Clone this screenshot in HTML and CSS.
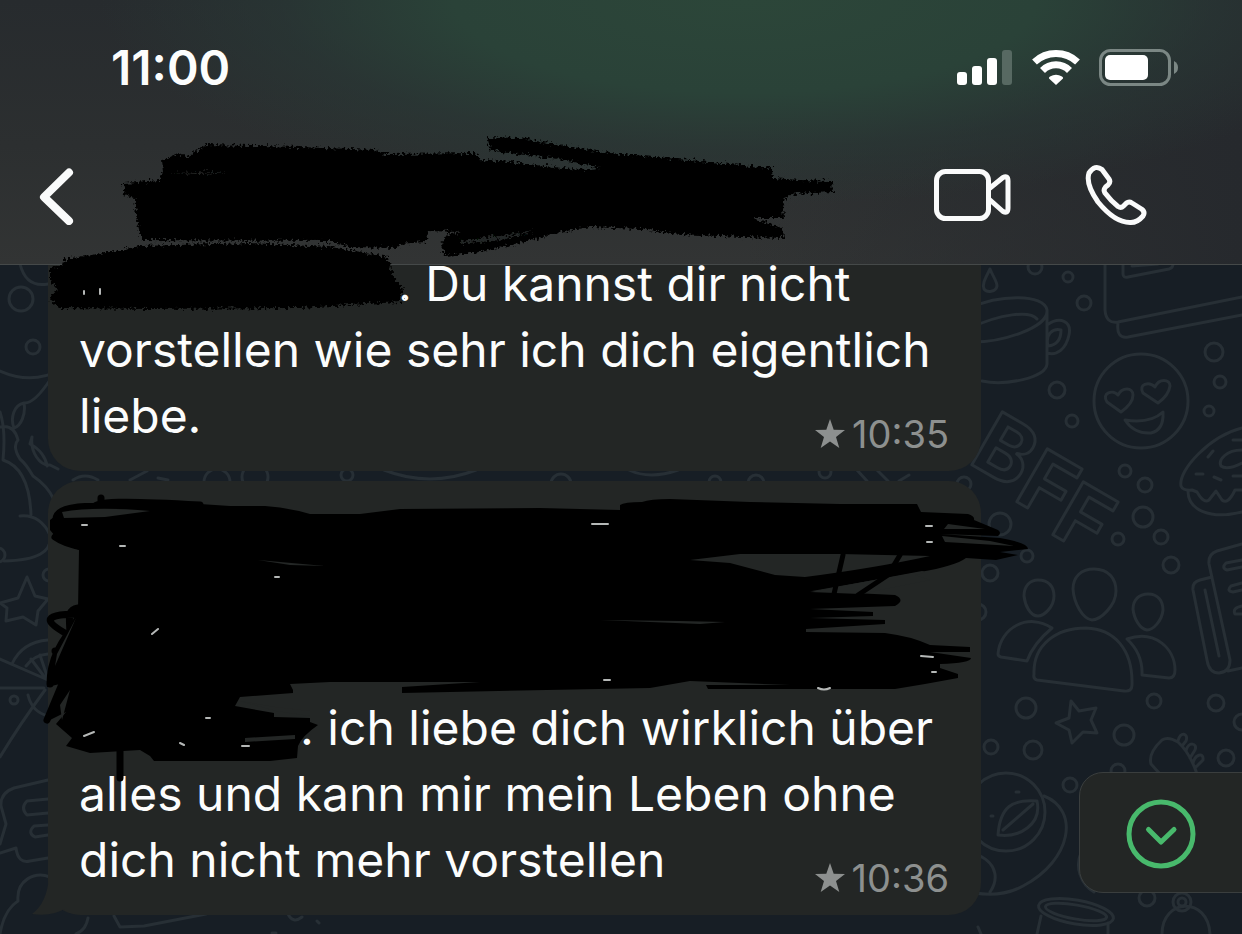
FILE: index.html
```
<!DOCTYPE html>
<html lang="de">
<head>
<meta charset="utf-8">
<meta name="viewport" content="width=device-width, initial-scale=1">
<title>Chat</title>
<link rel="stylesheet" href="styles.css">
</head>
<body>
<div class="phone">
  <svg class="wallpaper" width="1242" height="934" viewBox="0 0 1242 934" aria-hidden="true">
    <!-- mug -->
    <path d="M990 269C985 279 982 284 984 289C987 293 996 292 997 286C997 281 993 277 990 269Z"/>
    <path d="M970 308C1000 294 1044 294 1047 310C1049 328 1000 343 970 342M970 328C1000 314 1030 310 1037 319M1047 310V364C1046 378 1005 386 982 381M1047 325C1060 316 1072 321 1069 335C1066 349 1057 356 1047 353M1048 346C1045 334 1053 328 1061 330C1061 338 1058 345 1048 346Z"/>
    <!-- book -->
    <path d="M1105 264V310Q1106 324 1118 322L1242 297M1118 323Q1116 339 1128 337L1242 315M1123 264V274Q1123 278 1128 277L1169 269Q1173 268 1173 264M1132 266L1158 264"/>
    <!-- smiley -->
    <circle cx="1141" cy="401" r="47"/>
    <path d="M1121 412L1107 402C1101 393 1113 389 1118 395C1122 387 1133 387 1133 395C1133 401 1128 407 1121 412ZM1158 403L1143 393C1138 384 1149 381 1155 387C1159 378 1170 379 1170 386C1169 393 1165 398 1158 403ZM1125 420Q1150 424 1163 412Q1164 430 1151 433Q1134 434 1125 420Z"/>
    <!-- lettering -->
    <g class="lettering">
      <text transform="translate(967 462) rotate(30)">B</text>
      <text transform="translate(1012 499) rotate(30)">F</text>
      <text transform="translate(1048 532) rotate(30)">F</text>
    </g>
    <!-- donut -->
    <path d="M1242 428C1210 436 1178 470 1181 486Q1183 491 1192 490L1197 492Q1204 504 1209 500L1216 491L1222 500Q1228 505 1235 490H1242M1188 491C1188 510 1210 520 1242 512M1242 450C1226 450 1218 460 1221 466C1226 470 1236 466 1242 463M1208 457L1213 451M1196 474H1203M1214 477L1221 480M1233 440H1242M1233 476H1242"/>
    <!-- people -->
    <path d="M1094 569C1109 569 1116 579 1116 591C1116 606 1100 620 1092 620C1083 619 1074 604 1073 589C1073 577 1081 569 1094 569ZM1038 580C1049 580 1054 587 1054 596C1054 607 1044 616 1038 616C1030 616 1025 605 1024 596C1024 586 1030 580 1038 580ZM1148 594C1159 594 1163 602 1163 610C1162 621 1153 630 1147 630C1140 629 1134 619 1133 609C1133 600 1139 594 1148 594ZM1034 674C1033 645 1056 628 1086 628C1114 629 1133 649 1132 685Q1132 692 1124 691L1037 680Q1033 679 1034 674ZM998 654C1000 628 1028 612 1052 628Q1033 644 1027 661L1001 657Q998 656 998 654ZM1127 639C1155 629 1175 649 1175 670Q1175 678 1169 678L1142 675Q1143 654 1127 639Z"/>
    <!-- notebook -->
    <path d="M1242 544L1217 551Q1208 554 1209 564L1230 660Q1230 672 1219 673Q1209 673 1207 660L1193 590Q1192 582 1200 580L1212 577M1205 590L1219 656M1228 671L1242 668M1242 560L1226 563Q1221 568 1227 570L1242 567M1242 583L1231 586Q1226 591 1233 592L1242 590M1242 606Q1232 608 1235 614H1242"/>
    <!-- star and toe -->
    <path d="M1071 701L1079 711L1096 708L1091 720L1097 733L1083 732L1072 743L1069 730L1056 723L1069 718Z"/>
    <path d="M1160 774L1151 764Q1148 753 1162 740Q1168 736 1178 742Q1190 753 1197 774M1178 741C1180 731 1189 733 1186 741L1182 746M1186 751C1188 741 1198 743 1195 750L1190 758M1193 764C1194 755 1204 751 1203 760L1196 767"/>
    <!-- avocado and jar -->
    <circle cx="1006" cy="812" r="39"/>
    <path d="M1044 796C1080 810 1072 860 1023 886C1005 896 988 895 975 893M978 855C1000 865 997 882 990 892M998 835C1000 807 1012 799 1037 801C1042 824 1020 838 998 835ZM1003 830L1033 804M1016 792H1019M991 816H993M1081 853C1075 866 1080 884 1094 892"/>
    <ellipse cx="1076" cy="912" rx="38" ry="12" transform="rotate(10 1076 912)"/>
    <ellipse cx="1076" cy="912" rx="31" ry="7" transform="rotate(10 1076 912)"/>
    <path d="M1041 916L1037 934M1108 923V934M1162 934C1162 898 1208 896 1210 934M978 927L981 934"/>
    <circle cx="1182" cy="902" r="9"/><circle cx="1182" cy="902" r="4"/>
    <!-- bubbles, right side -->
    <circle cx="1035" cy="267" r="7"/><circle cx="1068" cy="277" r="5"/><circle cx="1084" cy="303" r="7"/><circle cx="1214" cy="352" r="9"/><circle cx="1220" cy="382" r="6"/><circle cx="1209" cy="411" r="5"/><circle cx="1057" cy="390" r="8"/><circle cx="1072" cy="421" r="6"/><circle cx="1125" cy="471" r="6"/><circle cx="1145" cy="485" r="7"/><circle cx="1143" cy="517" r="10"/><circle cx="1118" cy="539" r="6"/><circle cx="1161" cy="537" r="7"/><circle cx="1171" cy="565" r="8"/><circle cx="1000" cy="524" r="11"/><circle cx="1027" cy="556" r="6"/><circle cx="990" cy="573" r="8"/><circle cx="978" cy="612" r="8"/><circle cx="1154" cy="701" r="7"/><circle cx="1026" cy="708" r="10"/><circle cx="1124" cy="735" r="10"/><circle cx="1216" cy="703" r="8"/><circle cx="991" cy="747" r="7"/><circle cx="1033" cy="750" r="9"/><circle cx="1226" cy="758" r="8"/><circle cx="1242" cy="722" r="8"/><circle cx="1070" cy="785" r="7"/><circle cx="1118" cy="771" r="7"/><circle cx="1147" cy="898" r="8"/><circle cx="964" cy="484" r="7"/>
    <!-- left side -->
    <circle cx="21" cy="299" r="12"/><circle cx="33" cy="347" r="7"/><circle cx="49" cy="575" r="6"/><circle cx="14" cy="700" r="4"/><circle cx="-2" cy="555" r="7"/>
    <path d="M20 264Q26 288 48 284M0 371Q32 385 60 370M50 380Q34 404 24 403C14 405 10 418 14 428C21 426 26 414 24 403M0 427Q14 424 18 440Q12 446 20 459Q26 464 33 476Q48 486 54 500M32 437C30 452 40 466 50 465L58 469M32 437L30 444C40 449 46 458 47 466M0 412Q6 430 3 460C22 466 30 486 31 515M20 516Q40 514 50 535Q54 560 4 561M0 603L18 598L27 577L35 596L48 599L38 611L36 625L23 617L6 621L7 608Z"/>
    <path d="M0 659L48 680M0 688H44M0 757Q20 724 45 690M12 664Q22 642 48 640M26 666Q34 655 48 654M28 695Q32 712 48 716M31 659L46 679M40 655L47 676"/>
    <path d="M48 780L14 788Q0 793 1 806L6 824L0 844M0 853L16 848Q18 864 30 861L48 858M48 799L27 801Q20 808 27 815L48 813M48 825L34 826Q27 833 35 837L48 835M0 934Q4 910 18 901C16 880 35 871 50 877M88 918Q86 930 76 934M114 916L120 927L144 926L206 914M288 914Q293 924 302 917M272 933H276M317 921L319 923"/>
    <!-- strip between messages -->
    <path d="M73 480Q85 472 98 480M130 480L147 471M158 478L168 480M384 470Q430 488 476 470M629 470Q650 480 678 470M857 470L867 481M877 470L888 481M899 481L909 475"/>
    <circle cx="217" cy="482" r="13"/><circle cx="255" cy="477" r="13"/><circle cx="347" cy="475" r="6"/><circle cx="561" cy="484" r="10"/><circle cx="715" cy="482" r="6"/><circle cx="756" cy="483" r="8"/><circle cx="825" cy="472" r="6"/>
  </svg>

  <header class="header">
    <div class="status">
      <time class="clock" datetime="11:00">11:00</time>
      <div class="indicators">
        <svg class="signal" width="56" height="38" viewBox="0 0 56 38" role="img" aria-label="Signal">
          <rect x="0" y="23" width="10" height="13" rx="3"/><rect x="15" y="17" width="10" height="19" rx="3"/><rect x="30" y="9" width="10" height="27" rx="3"/><rect class="dim" x="45" y="1" width="10" height="35" rx="3"/>
        </svg>
        <svg class="wifi" width="48" height="38" viewBox="0 0 48 38" role="img" aria-label="WLAN">
          <path d="M2.500 13A31.500 31.500 0 0 1 45.500 13M10.500 21.500A19 19 0 0 1 37.500 21.500"/>
          <path class="solid" d="M24 36L17 29.500Q16.500 28.500 18 27.500Q24 24 30 27.500Q31.500 28.500 31 29.500Z"/>
        </svg>
        <svg class="battery" width="80" height="38" viewBox="0 0 80 38" role="img" aria-label="Batterie">
          <rect class="shell" x="1.500" y="1.500" width="69" height="34" rx="10"/><rect class="charge" x="6" y="6" width="43" height="25" rx="5"/><path class="cap" d="M75 12Q79 14 79 18.500T75 25Z"/>
        </svg>
      </div>
    </div>
    <nav class="toolbar" aria-label="Chat">
      <button class="icon-button" type="button" aria-label="Zurück">
        <svg width="36" height="60" viewBox="38 166 36 60"><path class="back" d="M69 173.500L44 198L69 222"/></svg>
      </button>
      <div class="calls">
        <button class="icon-button" type="button" aria-label="Videoanruf">
          <svg width="78" height="56" viewBox="934 167 78 56"><rect x="936.500" y="171.500" width="52" height="47" rx="9"/><path d="M990 188L1003 177.500Q1008 175 1008 181V208Q1008 214 1003 211.500L990 200"/></svg>
        </button>
        <button class="icon-button" type="button" aria-label="Anruf">
          <svg width="64" height="66" viewBox="1084 162 64 66"><path d="M1102 169.500L1109 179Q1111 182 1108 185L1105.500 187Q1103 190 1105 193Q1111 201 1118 206.500Q1121 208.500 1123.500 206L1126.500 203Q1129 201 1132 203L1141.500 209Q1145.500 212 1143 216Q1137 223 1130 222.500C1118 222.500 1107 213 1098 202C1091 192 1086 182 1089 173Q1095 164 1102 169.500Z"/></svg>
        </button>
      </div>
    </nav>
  </header>

  <main class="chat">
    <article class="bubble">
      <p class="text"><span class="hidden-start"></span>. Du kannst dir nicht<br>vorstellen wie sehr ich dich eigentlich<br>liebe.</p>
      <footer class="meta"><svg width="32" height="32" viewBox="0 0 32 32" aria-hidden="true"><path d="M16 1L19.700 11.800L31 12L22 19L25.300 30L16 23.500L6.700 30L10 19L1 12L12.300 11.800Z"/></svg><time datetime="10:35">10:35</time></footer>
    </article>
    <article class="bubble bubble-last">
      <div class="hidden-lines"></div>
      <p class="text"><span class="hidden-start hidden-short"></span>. ich liebe dich wirklich über<br>alles und kann mir mein Leben ohne<br>dich nicht mehr vorstellen</p>
      <footer class="meta"><svg width="32" height="32" viewBox="0 0 32 32" aria-hidden="true"><path d="M16 1L19.700 11.800L31 12L22 19L25.300 30L16 23.500L6.700 30L10 19L1 12L12.300 11.800Z"/></svg><time datetime="10:36">10:36</time></footer>
      <svg class="tail" width="34" height="38" viewBox="0 0 34 38" aria-hidden="true"><path d="M17 0Q15 26 0 37Q20 40 34 31V0Z"/></svg>
    </article>
  </main>

  <button class="jump" type="button" aria-label="Nach unten">
    <svg width="70" height="70" viewBox="0 0 70 70"><circle cx="35" cy="35" r="32"/><path d="M22.500 30.500L35 43L48 30.500"/></svg>
  </button>

  <svg class="marker" width="1242" height="934" viewBox="0 0 1242 934" aria-hidden="true">
    <defs>
      <filter id="chalk" x="-5%" y="-10%" width="110%" height="120%">
        <feTurbulence type="fractalNoise" baseFrequency="0.35" numOctaves="2" seed="4"/>
        <feDisplacementMap in="SourceGraphic" scale="9" xChannelSelector="R" yChannelSelector="G"/>
        <feGaussianBlur stdDeviation="0.6"/>
      </filter>
    </defs>
    <g filter="url(#chalk)">
      <path d="M162 160L178 153L186 157L206 145L300 147L375 150L385 154L475 153L480 160L500 161L580 170L600 168L560 159L500 152L490 149L487 137L520 138L560 145L610 153L700 161L772 168L773 178L800 180L832 181L833 192L795 194L785 198L783 205L784 218L752 218L783 228L784 238L740 237L680 234L640 229L590 227L562 232L520 243L480 252L446 256L441 245L446 235L460 232L427 231L426 242L400 244L399 248L350 247L330 241L142 240L137 222L134 198L123 195L124 183L160 180L163 172Z"/>
      <path d="M64 259L105 253L140 246L250 243L330 247L388 257L393 275L403 290L400 302L300 308L150 309L60 308L50 300L57 288L50 281L50 268L62 266Z"/>
      <path class="gap" d="M460 241L500 236L535 231L500 240L460 244ZM163 173L230 172L200 174Z"/>
    </g>
    <path d="M92 506Q98 501 101 501L150 501L200 504L230 506L265 506Q290 508 310 514H360L400 509L540 508L620 510V505Q624 502 642 502Q650 499 670 499L750 502L840 504H917L921 512L968 514Q975 516 974 520L998 530Q1002 533 998 536L940 534L1000 538Q1028 543 1028 549L1000 552L1018 555L996 560L966 558Q955 566 920 572L812 591L895 595Q906 600 895 606L810 609L873 612V616L810 618L885 620V624L806 629V632L885 633Q910 636 930 645L970 647V652L930 652L971 658Q971 663 940 664V668L958 674V678L925 684L895 689H708L706 685L790 685L690 681L650 688L402 693V687L480 682L330 682L290 684L293 690V693L240 697L235 706L274 713V717L310 718V722L318 725Q302 736 298 746L297 758L270 761H154L150 756L140 750L90 753L66 746L72 738L56 724L66 712L46 722L48 712L60 684L47 687L52 660L78 610L79 550L60 542L50 530L50 520L58 514L66 507Z"/>
    <path class="stroke" d="M101 498V512M95 510C88 500 130 501 200 505M56 520C55 500 110 508 180 506M55 537C70 548 100 550 110 548M80 614C35 614 46 624 80 641M78 608C66 610 70 620 70 635M80 620Q50 650 50 684M47 720L72 660M55 651H72M120 750V778"/>
    <path class="gap" d="M690 560L740 554H840L930 556Q875 568 805 577L775 575L730 563ZM810 592L922 571Q930 572 915 575L930 580L860 594ZM258 560L325 566L290 565ZM600 620L680 621L725 622L700 624ZM62 512Q95 506 150 511L105 517L64 518ZM66 637L76 618L55 666L57 654ZM60 705L70 690L62 720ZM942 536L990 541L1014 546L945 542ZM245 738L295 735V739L245 742ZM948 524L985 529L944 529ZM240 701L275 707L310 711V716L276 711Z"/>
    <path class="stroke thin" d="M843 555L834 594M900 555L888 575L858 595"/>
    <path class="glint" d="M921 656L933 657M932 672H936M926 526H932M927 542H932M82 525H87M120 546H125M275 577H279M592 524H608M604 680H610M818 688Q824 691 830 688M206 718H210M180 743L184 745M84 736L94 732M242 746H249M152 634L158 629M84 291V294M100 289V294"/>
  </svg>
</div>
</body>
</html>
```

FILE: styles.css
```
* {
  box-sizing: border-box;
}

body {
  margin: 0;
  background: #171e25;
  color: #fcfdfd;
  font-family: Inter, "Liberation Sans", sans-serif;
}

.phone {
  position: relative;
  display: flex;
  flex-direction: column;
  height: 100vh;
  overflow: hidden;
}

.wallpaper,
.marker {
  position: absolute;
  top: 0;
  left: 0;
  pointer-events: none;
}

.wallpaper {
  fill: none;
  stroke: #272f35;
  stroke-width: 3;
  stroke-linecap: round;
  stroke-linejoin: round;
}

.lettering {
  font-size: 84px;
  font-weight: 700;
}

.header {
  position: relative;
  flex: none;
  border-bottom: 1px solid #454949;
  background:
    radial-gradient(ellipse 52% 78% at 60% 0, #2c4639 0, #2a4238 45%, #293b3788 72%, #2b313200 100%),
    linear-gradient(90deg, #26292d00 60%, #26292d 100%),
    linear-gradient(#272b2e, #2c2f30 55%, #323434);
}

.status {
  display: flex;
  justify-content: space-between;
  align-items: center;
  padding: 40px 63px 0 111px;
}

.clock {
  font-size: 48px;
  font-weight: 600;
  line-height: 56px;
}

.indicators {
  display: flex;
  align-items: center;
  gap: 19px;
  fill: #ffffff;
}

.dim {
  fill: #576962;
}

.wifi {
  fill: none;
  stroke: #ffffff;
  stroke-width: 7;
}

.wifi .solid {
  fill: #ffffff;
  stroke: none;
}

.shell {
  fill: none;
  stroke: #7b8784;
  stroke-width: 3;
}

.cap {
  fill: #7b8784;
}

.toolbar {
  display: flex;
  justify-content: space-between;
  align-items: center;
  padding: 66px 94px 36px 38px;
}

.calls {
  display: flex;
  align-items: center;
  gap: 72px;
}

.icon-button {
  display: block;
  padding: 0;
  border: 0;
  background: none;
}

.icon-button svg {
  display: block;
  fill: none;
  stroke: #fafbfb;
  stroke-width: 5;
  stroke-linejoin: round;
  stroke-linecap: round;
}

.icon-button .back {
  stroke-width: 8;
}

.chat {
  position: relative;
  display: flex;
  flex: 1;
  flex-direction: column;
  justify-content: flex-end;
  gap: 10px;
  min-height: 0;
  padding: 0 48px 19px;
  overflow: hidden;
}

.bubble {
  position: relative;
  display: grid;
  flex: none;
  width: 100%;
  max-width: 933px;
  padding: 16px 32px 22px 31px;
  border-radius: 32px;
  background: #232625;
}

.text {
  grid-area: 2 / 1;
  margin: 0;
  font-size: 48px;
  line-height: 66px;
}

.hidden-lines {
  grid-area: 1 / 1;
  height: 198px;
}

.hidden-start {
  display: inline-block;
  width: 319px;
}

.hidden-short {
  width: 221px;
}

.meta {
  display: flex;
  grid-area: 2 / 1;
  align-items: center;
  align-self: end;
  justify-self: end;
  gap: 6px;
  height: 30px;
  color: #8d908f;
  font-size: 38px;
  line-height: 30px;
}

.meta svg {
  fill: #8d908f;
}

.tail {
  position: absolute;
  bottom: 0;
  left: -16px;
  fill: #232625;
}

.jump {
  position: absolute;
  right: -1px;
  bottom: 41px;
  padding: 26px 46px 23px;
  border: 1px solid #3a3e3e;
  border-radius: 24px 0 0 24px;
  background: #232625;
}

.jump svg {
  display: block;
  fill: none;
  stroke: #48b96c;
  stroke-width: 5;
  stroke-linecap: round;
  stroke-linejoin: round;
}

.marker .gap {
  fill: #232625;
}

.marker .stroke,
.marker .glint {
  fill: none;
  stroke: #000000;
  stroke-width: 7;
  stroke-linecap: round;
}

.marker .thin {
  stroke-width: 5;
}

.marker .glint {
  stroke: #b5b8b7;
  stroke-width: 2;
}
```
